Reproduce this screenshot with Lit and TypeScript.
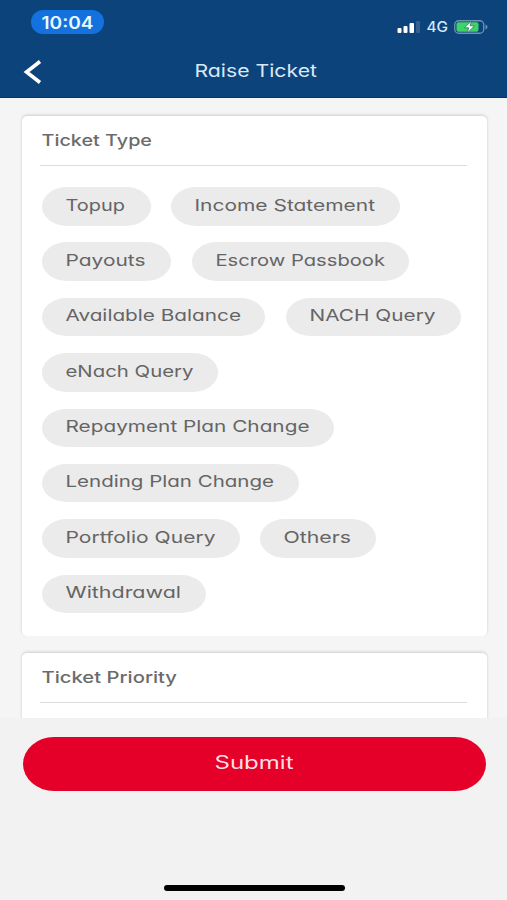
import { LitElement, html, css } from "lit";
import { customElement, property } from "lit/decorators.js";

/** A label whose glyphs are widened to an exact measure. */
@customElement("wide-label")
class WideLabel extends LitElement {
  @property() text = "";
  @property({ type: Number }) measure = 100;
  @property({ type: Number }) size = 17;

  static styles = css`
    :host { display: block; flex: none; }
    .label { display: block; height: 24px; overflow: visible; }
    .glyphs {
      fill: currentColor;
      font-family: Inter, "Liberation Sans", sans-serif;
      font-feature-settings: "cv11" 1;
    }
  `;

  render() {
    return html`<svg class="label" width=${this.measure} height="24">
      <text class="glyphs" x="-0.5" y="18" font-size=${this.size}
        textLength=${this.measure} lengthAdjust="spacingAndGlyphs">${this.text}</text>
    </svg>`;
  }
}

const ticketTypes: { name: string; measure: number; width: number }[] = [
  { name: "Topup", measure: 59.5, width: 109 },
  { name: "Income Statement", measure: 180.5, width: 229 },
  { name: "Payouts", measure: 80, width: 129.5 },
  { name: "Escrow Passbook", measure: 169.5, width: 217.5 },
  { name: "Available Balance", measure: 175.5, width: 223.5 },
  { name: "NACH Query", measure: 126, width: 175 },
  { name: "eNach Query", measure: 128, width: 176.5 },
  { name: "Repayment Plan Change", measure: 244, width: 292.5 },
  { name: "Lending Plan Change", measure: 208.5, width: 257.5 },
  { name: "Portfolio Query", measure: 150, width: 198 },
  { name: "Others", measure: 67.5, width: 116 },
  { name: "Withdrawal", measure: 115.5, width: 164.5 },
];

@customElement("app-root")
class AppRoot extends LitElement {
  static styles = css`
    :host {
      display: flex;
      flex-direction: column;
      width: 507px;
      height: 900px;
      box-sizing: border-box;
      overflow: hidden;
      background: #f3f3f4;
      color: #666;
      font-family: Inter, "Liberation Sans", sans-serif;
    }
    .top {
      flex: none;
      height: 98px;
      box-sizing: border-box;
      background: #0d437b;
      border-bottom: 1px solid #0a3365;
      display: flex;
      flex-direction: column;
    }
    .status {
      display: flex;
      justify-content: space-between;
      align-items: center;
      height: 24px;
      padding: 10px 19px 0 31px;
    }
    .time {
      display: flex;
      justify-content: center;
      width: 73px;
      height: 24px;
      border-radius: 12px;
      background: #1472de;
      color: #e8fbff;
      font-weight: 600;
    }
    .time wide-label { margin-top: 0.5px; }
    .signals { display: flex; align-items: center; margin-top: 9px; color: #d5eafa; }
    .signals wide-label { margin: -1px 6px 0 7px; font-weight: 500; }
    .nav {
      display: grid;
      grid-template-columns: 60px 1fr 60px;
      align-items: center;
      height: 60px;
      margin-top: 7px;
      color: #d8e9f8;
    }
    .back { margin: 5px 0 0 23px; }
    .nav wide-label { justify-self: center; margin: 4px 0 0 6px; }
    .scroll {
      flex: none;
      height: 619.5px;
      overflow: hidden;
      padding: 18px 20px 0 21.5px;
      box-sizing: border-box;
      background: #f5f5f5;
    }
    .card {
      box-sizing: border-box;
      background: #fff;
      border-radius: 5px;
      box-shadow: 0 -1px 3px rgba(0, 0, 0, 0.17);
      padding: 0 20px;
      height: 520px;
      margin-bottom: 17px;
      clip-path: inset(-5px -5px 0 -5px);
    }
    .heading {
      height: 49.5px;
      box-sizing: border-box;
      border-bottom: 1.5px solid #dcdcdc;
      padding: 12.3px 0 0 2px;
      margin: 0 0 0 -2px;
      font-weight: 500;
      color: #6b6b6b;
    }
    .chips {
      display: flex;
      flex-wrap: wrap;
      gap: 16.9px 20.5px;
      padding-top: 21.5px;
      margin-right: -3px;
    }
    .chip {
      box-sizing: border-box;
      height: 38.5px;
      padding: 5.5px 0 0 24px;
      border-radius: 25px / 19.25px;
      background: #ebebeb;
      color: #656565;
    }
    .footer {
      flex: 1;
      display: flex;
      flex-direction: column;
      justify-content: space-between;
      align-items: center;
      padding: 19.5px 0 9px 1px;
      background: #f2f2f3;
    }
    .submit {
      width: 463px;
      height: 54px;
      box-sizing: border-box;
      padding-top: 13.5px;
      display: flex;
      justify-content: center;
      border-radius: 31px / 27px;
      background: #e40028;
      color: #ffdfe4;
    }
    .home { width: 181px; height: 6px; border-radius: 3px; background: #000; }
  `;

  render() {
    return html`
      <header class="top">
        <div class="status">
          <div class="time"><wide-label text="10:04" measure="52" size="17"></wide-label></div>
          <div class="signals">
            <svg width="23" height="12" viewBox="0 0 23 12">
              <rect x="0.5" y="7" width="4" height="5" rx="1" fill="#fff" />
              <rect x="6.5" y="5" width="4" height="7" rx="1" fill="#fff" />
              <rect x="12.5" y="2" width="4.5" height="10" rx="1" fill="#fff" />
              <rect x="19" y="0" width="4" height="12" rx="1" fill="#345f8f" />
            </svg>
            <wide-label text="4G" measure="21.5" size="14"></wide-label>
            <svg width="34" height="14" viewBox="0 0 34 14">
              <rect x="0.75" y="0.75" width="29" height="12.5" rx="4" fill="none" stroke="#6f93b5" stroke-width="1.3" />
              <rect x="2.5" y="2.3" width="22" height="9.4" rx="2" fill="#3fd267" />
              <path d="M31.5 4.5v5q2-.8 2-2.5t-2-2.5z" fill="#6f93b5" />
              <path d="M17.5 .8 10.6 7.8h4.2l-1.6 5.4 7.2-7.4h-4.3z" fill="#fff" stroke="#1f6a68" stroke-width=".7" />
            </svg>
          </div>
        </div>
        <div class="nav">
          <svg class="back" width="20" height="24" viewBox="0 0 20 24">
            <path d="M17 1.5 3.5 12 17 22.5" fill="none" stroke="#fff" stroke-width="3.6" />
          </svg>
          <wide-label text="Raise Ticket" measure="122.5" size="17.5"></wide-label>
        </div>
      </header>
      <main class="scroll">
        <section class="card">
          <div class="heading"><wide-label text="Ticket Type" measure="110.5" size="16.3"></wide-label></div>
          <div class="chips">
            ${ticketTypes.map(
              (t) => html`<div class="chip" style="width:${t.width}px">
                <wide-label text=${t.name} measure=${t.measure} size="16.5"></wide-label>
              </div>`
            )}
          </div>
        </section>
        <section class="card">
          <div class="heading"><wide-label text="Ticket Priority" measure="135.5" size="16.3"></wide-label></div>
        </section>
      </main>
      <footer class="footer">
        <div class="submit"><wide-label text="Submit" measure="79" size="18"></wide-label></div>
        <div class="home"></div>
      </footer>
    `;
  }
}
